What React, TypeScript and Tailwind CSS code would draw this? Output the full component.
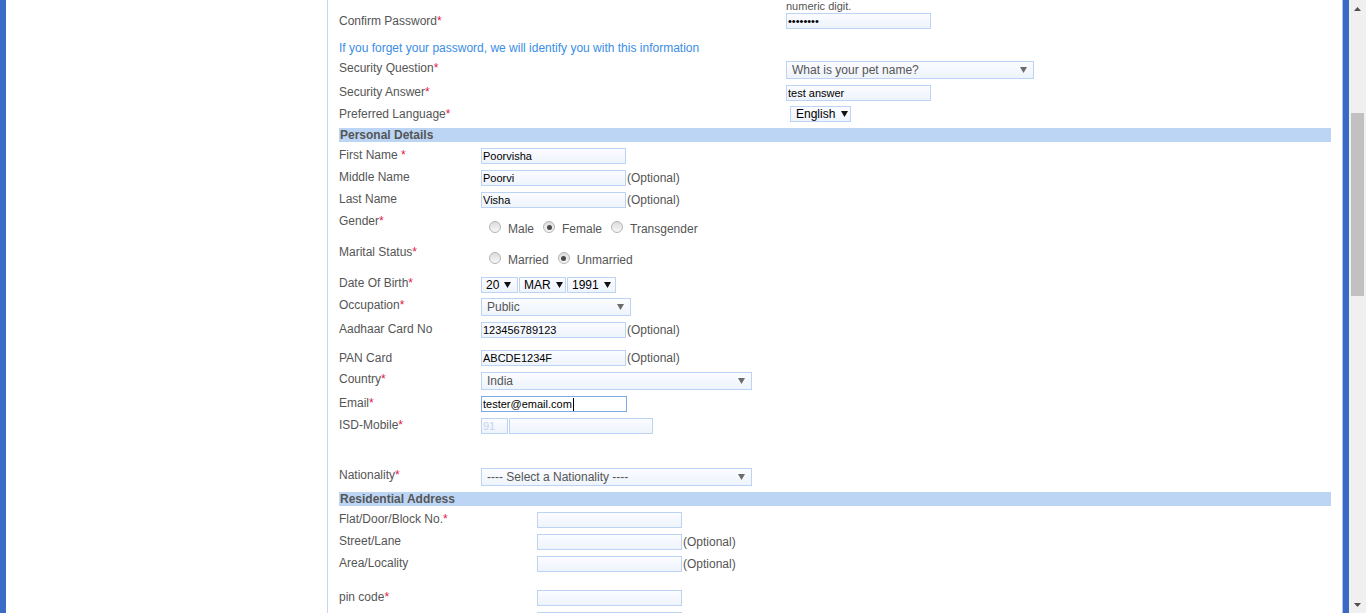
import React from 'react';
import { clsx } from 'clsx';

const LABEL = 'text-[12px] leading-[14px] text-[#555]';
const BOX = 'border border-[#bcd3f3] bg-gradient-to-b from-[#fbfcff] to-[#eef4fc]';

function Req() {
  return <span className="text-[#e3174a]">*</span>;
}

function Arrow({ dark }: { dark?: boolean }) {
  return (
    <svg width="7" height="6" viewBox="0 0 7 6" className="shrink-0">
      <path d="M0 0h7L3.5 6z" fill={dark ? '#111' : '#6b6b6b'} />
    </svg>
  );
}

function Field({ w, value, focus, dim, caret }: { w: string; value?: string; focus?: boolean; dim?: boolean; caret?: boolean }) {
  return (
    <div
      className={clsx(
        'flex h-[16px] shrink-0 items-center pl-px text-[11px] leading-[14px]',
        w,
        focus ? 'border border-[#7da7e8] bg-white' : BOX,
        dim ? 'text-[#c3d3ee]' : 'text-black'
      )}
    >
      {value}
      {caret && <span className="ml-px h-[13px] w-px bg-black" />}
    </div>
  );
}

function Pick({ w, value }: { w: string; value: string }) {
  return (
    <div
      className={clsx(
        'flex h-[18px] shrink-0 items-center justify-between pl-[5px] pr-[6px] text-[12px] text-[#555]',
        w,
        BOX
      )}
    >
      <span>{value}</span>
      <Arrow />
    </div>
  );
}

function Mini({ w, value, className }: { w: string; value: string; className?: string }) {
  return (
    <div
      className={clsx(
        'flex h-[16px] shrink-0 items-center gap-[5px] overflow-hidden pl-[4px] text-[12px] text-black',
        w,
        BOX,
        className
      )}
    >
      <span>{value}</span>
      <Arrow dark />
    </div>
  );
}

function Optional() {
  return <span className="ml-px text-[12px] leading-[14px] text-[#555]">(Optional)</span>;
}

function Radio({ label, checked }: { label: string; checked?: boolean }) {
  return (
    <div className="ml-[8px] mr-[1px] flex items-start gap-[7px]">
      <span className="flex h-[12px] w-[12px] items-center justify-center rounded-full border border-[#b4b4b4] bg-gradient-to-b from-[#dcdcdc] to-[#f8f8f8]">
        {checked && <span className="h-[5px] w-[5px] rounded-full bg-[#4a4a4a]" />}
      </span>
      <span className="mt-px text-[12px] leading-[14px] text-[#555]">{label}</span>
    </div>
  );
}

function Section({ title }: { title: string }) {
  return (
    <div className="h-[14px] bg-[#bcd5f5] pl-px text-[12px] font-bold leading-[14px] text-[#555]">{title}</div>
  );
}

function Scrollbar() {
  return (
    <div className="flex w-[17px] shrink-0 flex-col bg-[#f0f0f0]">
      <div className="flex h-[17px] items-center justify-center">
        <svg width="7" height="4" viewBox="0 0 7 4">
          <path d="M0 4L3.5 0L7 4z" fill="#505050" />
        </svg>
      </div>
      <div className="h-[96px]" />
      <div className="mx-[2px] h-[183px] bg-[#c1c1c1]" />
      <div className="flex-1" />
      <div className="flex h-[17px] items-center justify-center">
        <svg width="7" height="4" viewBox="0 0 7 4">
          <path d="M0 0h7L3.5 4z" fill="#505050" />
        </svg>
      </div>
    </div>
  );
}

export default function App() {
  return (
    <div className="flex h-[613px] w-[1366px] overflow-hidden bg-white font-['Liberation_Sans',Arial,sans-serif]">
      <div className="w-[6px] shrink-0 bg-[#3a6bc6]" />
      <div className="w-[321px] shrink-0" />

      <main className="w-[1015px] shrink-0 border-l border-[#c6d7f1] px-[11px]">
        {/* account block, scrolled past its top */}
        <div className="flex h-[13px]">
          <span className="ml-[447px] text-[11px] leading-[13px] text-[#555]">numeric digit.</span>
        </div>
        <div className="flex h-[28px] items-start">
          <span className={clsx(LABEL, 'mt-px w-[447px] shrink-0')}>Confirm Password<Req /></span>
          <Field w="w-[145px]" value="••••••••" />
        </div>
        <div className="h-[20px] text-[12px] leading-[14px] text-[#3a8ee6]">
          If you forget your password, we will identify you with this information
        </div>
        <div className="flex h-[24px] items-start">
          <span className={clsx(LABEL, 'w-[447px] shrink-0')}>Security Question<Req /></span>
          <Pick w="w-[248px]" value="What is your pet name?" />
        </div>
        <div className="flex h-[21px] items-start">
          <span className={clsx(LABEL, 'w-[447px] shrink-0')}>Security Answer<Req /></span>
          <Field w="w-[145px]" value="test answer" />
        </div>
        <div className="flex h-[22px] items-start">
          <span className={clsx(LABEL, 'mt-px w-[447px] shrink-0')}>Preferred Language<Req /></span>
          <Mini w="w-[61px]" value="English" className="ml-[4px] gap-[6px] pl-[5px]" />
        </div>

        <Section title="Personal Details" />
        <div className="mt-[6px] flex h-[22px] items-start">
          <span className={clsx(LABEL, 'w-[142px] shrink-0')}>First Name <Req /></span>
          <Field w="w-[145px]" value="Poorvisha" />
        </div>
        <div className="flex h-[22px] items-start">
          <span className={clsx(LABEL, 'w-[142px] shrink-0')}>Middle Name</span>
          <div className="flex items-center">
            <Field w="w-[145px]" value="Poorvi" />
            <Optional />
          </div>
        </div>
        <div className="flex h-[22px] items-start">
          <span className={clsx(LABEL, 'w-[142px] shrink-0')}>Last Name</span>
          <div className="flex items-center">
            <Field w="w-[145px]" value="Visha" />
            <Optional />
          </div>
        </div>
        <div className="flex h-[31px] items-start">
          <span className={clsx(LABEL, 'w-[142px] shrink-0')}>Gender<Req /></span>
          <div className="mt-[7px] flex items-start">
            <Radio label="Male" />
            <Radio label="Female" checked />
            <Radio label="Transgender" />
          </div>
        </div>
        <div className="flex h-[31px] items-start">
          <span className={clsx(LABEL, 'w-[142px] shrink-0')}>Marital Status<Req /></span>
          <div className="mt-[7px] flex items-start">
            <Radio label="Married" />
            <Radio label="Unmarried" checked />
          </div>
        </div>
        <div className="flex h-[22px] items-start">
          <span className={clsx(LABEL, 'w-[142px] shrink-0')}>Date Of Birth<Req /></span>
          <div className="mt-px flex gap-px">
            <Mini w="w-[37px]" value="20" />
            <Mini w="w-[47px]" value="MAR" />
            <Mini w="w-[49px]" value="1991" />
          </div>
        </div>
        <div className="flex h-[24px] items-start">
          <span className={clsx(LABEL, 'w-[142px] shrink-0')}>Occupation<Req /></span>
          <Pick w="w-[150px]" value="Public" />
        </div>
        <div className="flex h-[28px] items-start">
          <span className={clsx(LABEL, 'w-[142px] shrink-0')}>Aadhaar Card No</span>
          <div className="flex items-center">
            <Field w="w-[145px]" value="123456789123" />
            <Optional />
          </div>
        </div>
        <div className="flex h-[22px] items-start">
          <span className={clsx(LABEL, 'mt-px w-[142px] shrink-0')}>PAN Card</span>
          <div className="flex items-center">
            <Field w="w-[145px]" value="ABCDE1234F" />
            <Optional />
          </div>
        </div>
        <div className="flex h-[24px] items-start">
          <span className={clsx(LABEL, 'w-[142px] shrink-0')}>Country<Req /></span>
          <Pick w="w-[271px]" value="India" />
        </div>
        <div className="flex h-[22px] items-start">
          <span className={clsx(LABEL, 'w-[142px] shrink-0')}>Email<Req /></span>
          <Field w="w-[146px]" value="tester@email.com" focus caret />
        </div>
        <div className="flex h-[50px] items-start">
          <span className={clsx(LABEL, 'w-[142px] shrink-0')}>ISD-Mobile<Req /></span>
          <div className="flex gap-px">
            <Field w="w-[27px]" value="91" dim />
            <Field w="w-[144px]" />
          </div>
        </div>
        <div className="flex h-[24px] items-start">
          <span className={clsx(LABEL, 'w-[142px] shrink-0')}>Nationality<Req /></span>
          <Pick w="w-[271px]" value="---- Select a Nationality ----" />
        </div>

        <Section title="Residential Address" />
        <div className="mt-[6px] flex h-[22px] items-start">
          <span className={clsx(LABEL, 'w-[198px] shrink-0')}>Flat/Door/Block No.<Req /></span>
          <Field w="w-[145px]" />
        </div>
        <div className="flex h-[22px] items-start">
          <span className={clsx(LABEL, 'w-[198px] shrink-0')}>Street/Lane</span>
          <div className="flex items-center">
            <Field w="w-[145px]" />
            <Optional />
          </div>
        </div>
        <div className="flex h-[34px] items-start">
          <span className={clsx(LABEL, 'w-[198px] shrink-0')}>Area/Locality</span>
          <div className="flex items-center">
            <Field w="w-[145px]" />
            <Optional />
          </div>
        </div>
        <div className="flex h-[22px] items-start">
          <span className={clsx(LABEL, 'w-[198px] shrink-0')}>pin code<Req /></span>
          <Field w="w-[145px]" />
        </div>
        <div className="flex h-[22px] items-start">
          <span className="w-[198px] shrink-0" />
          <Field w="w-[145px]" />
        </div>
      </main>

      <div className="w-px shrink-0 bg-[#a9c2ec]" />
      <div className="w-[6px] shrink-0 bg-[#3a69c5]" />
      <Scrollbar />
    </div>
  );
}
